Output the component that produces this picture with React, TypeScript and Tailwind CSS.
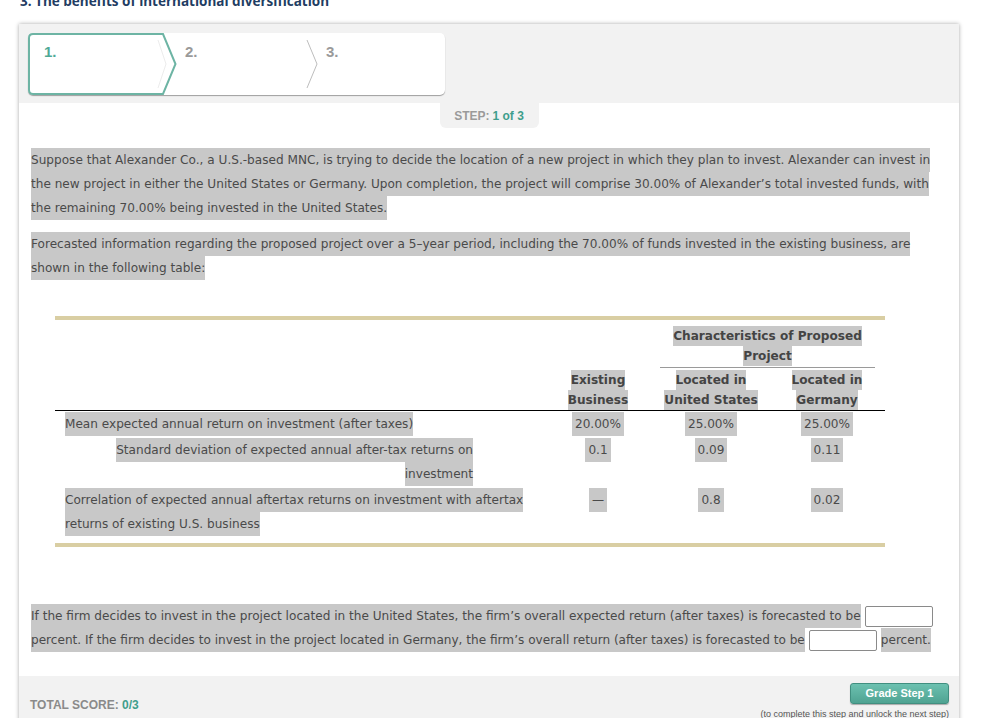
import React from "react";

const body = "font-['DejaVu_Sans',Verdana,sans-serif]";
const arial = "font-['Liberation_Sans',Arial,sans-serif]";

function Hl({ children, className = "" }: { children: React.ReactNode; className?: string }) {
  return <span className={`bg-[#c8c8c8] py-[5px] ${className}`}>{children}</span>;
}

function HeadHl({ children }: { children: React.ReactNode }) {
  return <span className="bg-[#c8c8c8] py-[3px]">{children}</span>;
}

function Stepper() {
  const num = `${arial} text-[15px] font-bold leading-[17px]`;
  return (
    <div className="flex h-[62px] w-[417px] rounded-[5px] bg-white shadow-[0_1px_1px_rgba(0,0,0,0.35)]">
      <div className={`relative w-[148px] pl-[16px] pt-[10px] ${num}`}>
        <svg className="absolute left-0 top-0" width="150" height="62" viewBox="0 0 150 62">
          <path d="M130 7 L138 31 L130 55" fill="none" stroke="#ececec" strokeWidth="1" />
          <path
            d="M5 1 L135 1 L147.5 31 L135 61 L5 61 Q1 61 1 57 L1 5 Q1 1 5 1 Z"
            fill="none"
            stroke="#6db4a4"
            strokeWidth="2"
          />
        </svg>
        <span className="relative text-[#4fa996]">1.</span>
      </div>
      <div className={`flex w-[142px] justify-between pl-[9px] pt-[10px] ${num}`}>
        <span className="text-[#9a9a9a]">2.</span>
        <svg className="mt-[-3px]" width="12" height="50" viewBox="0 0 12 50">
          <path d="M1 0 L11 24 L1 48" fill="none" stroke="#bdbdbd" strokeWidth="1" />
        </svg>
      </div>
      <div className={`pl-[8px] pt-[10px] ${num}`}>
        <span className="text-[#9a9a9a]">3.</span>
      </div>
    </div>
  );
}

function DataTable() {
  return (
    <div className={`ml-[24px] w-[830px] text-[12.1px] text-[#4a4a4a] ${body}`}>
      <div className="h-[4px] bg-[#d9cea3]" />
      <div className="grid grid-cols-[605px_215px_1fr]">
        <div />
        <div className="border-b border-[#9a9a9a] pb-[1px] pt-[6px] text-center font-bold leading-[20px] text-[#444]">
          <HeadHl>Characteristics of Proposed Project</HeadHl>
        </div>
      </div>
      <div className="grid grid-cols-[505px_76px_150px_82px_1fr] border-b border-black pt-[2px] font-bold leading-[20px] text-[#444]">
        <div />
        <div className="text-center">
          <HeadHl>Existing Business</HeadHl>
        </div>
        <div className="px-[22px] text-center">
          <HeadHl>Located in United States</HeadHl>
        </div>
        <div className="text-center">
          <HeadHl>Located in Germany</HeadHl>
        </div>
        <div />
      </div>
      <div className="grid grid-cols-[505px_76px_150px_82px_1fr] py-[1px] leading-[24px]">
        <div className="pl-[10px]">
          <Hl>Mean expected annual return on investment (after taxes)</Hl>
        </div>
        <div className="text-center"><Hl className="px-[3px]">20.00%</Hl></div>
        <div className="text-center"><Hl className="px-[3px]">25.00%</Hl></div>
        <div className="text-center"><Hl className="px-[3px]">25.00%</Hl></div>
        <div />
      </div>
      <div className="grid grid-cols-[505px_76px_150px_82px_1fr] py-[1px] leading-[24px]">
        <div className="pl-[10px]">
          <div className="w-[408px] text-right">
            <Hl>Standard deviation of expected annual after-tax returns on investment</Hl>
          </div>
        </div>
        <div className="text-center"><Hl className="px-[3px]">0.1</Hl></div>
        <div className="text-center"><Hl className="px-[3px]">0.09</Hl></div>
        <div className="text-center"><Hl className="px-[3px]">0.11</Hl></div>
        <div />
      </div>
      <div className="grid grid-cols-[505px_76px_150px_82px_1fr] py-[1px] leading-[24px]">
        <div className="pl-[10px]">
          <Hl>Correlation of expected annual aftertax returns on investment with aftertax returns of existing U.S. business</Hl>
        </div>
        <div className="text-center"><Hl className="px-[3px]">—</Hl></div>
        <div className="text-center"><Hl className="px-[3px]">0.8</Hl></div>
        <div className="text-center"><Hl className="px-[3px]">0.02</Hl></div>
        <div />
      </div>
      <div className="mt-[6px] h-[4px] bg-[#d9cea3]" />
    </div>
  );
}

function Blank() {
  return (
    <input
      type="text"
      className="mx-[4px] inline-block h-[21px] w-[68px] rounded-[2px] border border-[#8a8a8a] bg-white align-middle"
    />
  );
}

export default function App() {
  return (
    <div className="min-h-[718px] overflow-hidden bg-white">
      <h2 className="mt-[-8px] pl-[20px] font-['Open_Sans',sans-serif] text-[13.5px] font-bold leading-[18px] text-[#1f3d63]">
        3. The benefits of international diversification
      </h2>
      <div className="ml-[19px] mt-[14px] w-[940px] bg-white shadow-[0_0_4px_rgba(0,0,0,0.35)]">
        <div className="bg-[#f2f2f2] pb-[8px] pl-[9px] pt-[9px]">
          <Stepper />
        </div>
        <div className={`mx-auto flex h-[25px] w-[99px] items-center justify-center rounded-b-[6px] bg-[#f2f2f2] ${arial} text-[12px] font-bold`}>
          <span className="text-[#9a9a9a]">STEP:</span>
          <span className="ml-[3px] text-[#3f9e8c]">1 of 3</span>
        </div>

        <div className={`pl-[12px] pr-[22px] pt-[20px] text-[12.1px] leading-[24px] text-[#4a4a4a] ${body}`}>
          <p>
            <Hl>
              Suppose that Alexander Co., a U.S.-based MNC, is trying to decide the location of a new project in which they plan to invest. Alexander can invest in the new project in either the United States or Germany. Upon completion, the project will comprise 30.00% of Alexander’s total invested funds, with the remaining 70.00% being invested in the United States.
            </Hl>
          </p>
          <p className="mt-[12px]">
            <Hl>
              Forecasted information regarding the proposed project over a 5–year period, including the 70.00% of funds invested in the existing business, are shown in the following table:
            </Hl>
          </p>
        </div>

        <div className="pl-[12px] pt-[36px]">
          <DataTable />
        </div>

        <div className={`pl-[12px] pr-[20px] pt-[57px] pb-[24px] text-[12.1px] leading-[24px] text-[#4a4a4a] ${body}`}>
          <p>
            <Hl>
              If the firm decides to invest in the project located in the United States, the firm’s overall expected return (after taxes) is forecasted to be
            </Hl>
            <Blank />
            <Hl>
              percent. If the firm decides to invest in the project located in Germany, the firm’s overall return (after taxes) is forecasted to be
            </Hl>
            <Blank />
            <Hl>percent.</Hl>
          </p>
        </div>

        <div className={`flex h-[60px] justify-between bg-[#f2f2f2] pl-[11px] pr-[10px] pt-[7px] ${arial}`}>
          <div className="pt-[15px] text-[12px] font-bold leading-[14px]">
            <span className="text-[#8a8a8a]">TOTAL SCORE: </span>
            <span className="text-[#3f9e8c]">0/3</span>
          </div>
          <div className="flex flex-col items-end">
            <button
              type="button"
              className="h-[21px] w-[99px] rounded-[3px] border border-[#418f80] bg-gradient-to-b from-[#6cc1b0] to-[#4fa392] text-[11px] font-bold text-white shadow-[0_1px_1px_rgba(0,0,0,0.3)]"
            >
              Grade Step 1
            </button>
            <span className="mt-[5px] text-[9px] leading-[10px] text-[#555]">
              (to complete this step and unlock the next step)
            </span>
          </div>
        </div>
      </div>
    </div>
  );
}
